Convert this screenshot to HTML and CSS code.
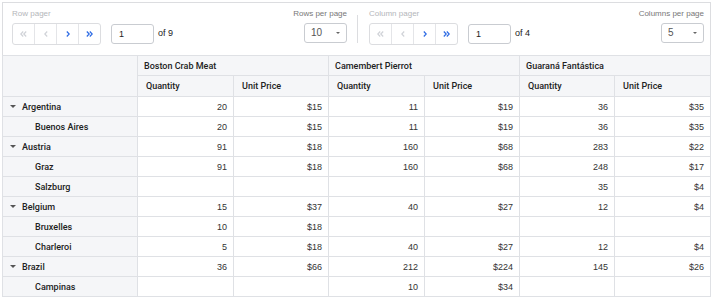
FILE: index.html
```html
<!DOCTYPE html>
<html>
<head>
    <title>Pivot Grid</title>
    <link rel="stylesheet" href="styles.css">
</head>
<body>
    <div class="pivot">
        <div class="pager-bar">
            <div class="pager-section">
                <div class="pager-block">
                    <div class="pager-label">Row pager</div>
                    <div class="pager-controls">
                        <div class="btn-group">
                            <span class="pg-btn disabled"><svg width="7" height="6" viewBox="0 0 7 6"><path d="M3.2 0.5 L0.8 3 L3.2 5.5 M6.2 0.5 L3.8 3 L6.2 5.5"/></svg></span>
                            <span class="pg-btn disabled"><svg width="4" height="6" viewBox="0 0 4 6"><path d="M3.2 0.5 L0.8 3 L3.2 5.5"/></svg></span>
                            <span class="pg-btn"><svg width="4" height="6" viewBox="0 0 4 6"><path d="M0.8 0.5 L3.2 3 L0.8 5.5"/></svg></span>
                            <span class="pg-btn"><svg width="7" height="6" viewBox="0 0 7 6"><path d="M0.8 0.5 L3.2 3 L0.8 5.5 M3.8 0.5 L6.2 3 L3.8 5.5"/></svg></span>
                        </div>
                        <div class="page-input">1</div>
                        <span class="page-total">of 9</span>
                    </div>
                </div>
                <div class="size-block">
                    <div class="size-label">Rows per page</div>
                    <div class="size-select">10<span class="caret"></span></div>
                </div>
            </div>
            <div class="pager-sep"></div>
            <div class="pager-section">
                <div class="pager-block">
                    <div class="pager-label">Column pager</div>
                    <div class="pager-controls">
                        <div class="btn-group">
                            <span class="pg-btn disabled"><svg width="7" height="6" viewBox="0 0 7 6"><path d="M3.2 0.5 L0.8 3 L3.2 5.5 M6.2 0.5 L3.8 3 L6.2 5.5"/></svg></span>
                            <span class="pg-btn disabled"><svg width="4" height="6" viewBox="0 0 4 6"><path d="M3.2 0.5 L0.8 3 L3.2 5.5"/></svg></span>
                            <span class="pg-btn"><svg width="4" height="6" viewBox="0 0 4 6"><path d="M0.8 0.5 L3.2 3 L0.8 5.5"/></svg></span>
                            <span class="pg-btn"><svg width="7" height="6" viewBox="0 0 7 6"><path d="M0.8 0.5 L3.2 3 L0.8 5.5 M3.8 0.5 L6.2 3 L3.8 5.5"/></svg></span>
                        </div>
                        <div class="page-input">1</div>
                        <span class="page-total">of 4</span>
                    </div>
                </div>
                <div class="size-block">
                    <div class="size-label">Columns per page</div>
                    <div class="size-select">5<span class="caret"></span></div>
                </div>
            </div>
        </div>

        <table class="grid">
            <colgroup>
                <col style="width: 135px">
                <col style="width: 96px">
                <col style="width: 95px">
                <col style="width: 96px">
                <col style="width: 95px">
                <col style="width: 95px">
                <col style="width: 96px">
            </colgroup>
            <thead>
                <tr class="head-top">
                    <th class="corner" rowspan="2"></th>
                    <th colspan="2">Boston Crab Meat</th>
                    <th colspan="2">Camembert Pierrot</th>
                    <th colspan="2">Guaraná Fantástica</th>
                </tr>
                <tr class="head-sub">
                    <th>Quantity</th>
                    <th>Unit Price</th>
                    <th>Quantity</th>
                    <th>Unit Price</th>
                    <th>Quantity</th>
                    <th>Unit Price</th>
                </tr>
            </thead>
            <tbody id="rows"></tbody>
        </table>
    </div>

    <script>
        const rows = [
            { name: 'Argentina', group: true, v: ['20', '$15', '11', '$19', '36', '$35'] },
            { name: 'Buenos Aires', v: ['20', '$15', '11', '$19', '36', '$35'] },
            { name: 'Austria', group: true, v: ['91', '$18', '160', '$68', '283', '$22'] },
            { name: 'Graz', v: ['91', '$18', '160', '$68', '248', '$17'] },
            { name: 'Salzburg', v: ['', '', '', '', '35', '$4'] },
            { name: 'Belgium', group: true, v: ['15', '$37', '40', '$27', '12', '$4'] },
            { name: 'Bruxelles', v: ['10', '$18', '', '', '', ''] },
            { name: 'Charleroi', v: ['5', '$18', '40', '$27', '12', '$4'] },
            { name: 'Brazil', group: true, v: ['36', '$66', '212', '$224', '145', '$26'] },
            { name: 'Campinas', v: ['', '', '10', '$34', '', ''] }
        ];

        const body = document.getElementById('rows');
        rows.forEach(function (r) {
            const tr = document.createElement('tr');
            const th = document.createElement('th');
            th.className = r.group ? 'row-head group' : 'row-head child';
            if (r.group) {
                const caret = document.createElement('span');
                caret.className = 'expander';
                th.appendChild(caret);
            }
            th.appendChild(document.createTextNode(r.name));
            tr.appendChild(th);
            r.v.forEach(function (val) {
                const td = document.createElement('td');
                td.textContent = val;
                tr.appendChild(td);
            });
            body.appendChild(tr);
        });
    </script>
</body>
</html>
```

FILE: styles.css
```css
body {
    margin: 0;
    padding: 2px;
    font-family: "Liberation Sans", Arial, sans-serif;
    font-size: 9px;
    color: #333;
    background-color: white;
}

.pivot {
    width: 707px;
    border: 1px solid #dcdde0;
    border-bottom: none;
}

/* pager bar */

.pager-bar {
    display: flex;
    align-items: flex-start;
    height: 52px;
    padding: 6px 6px 0 9px;
    box-sizing: border-box;
}

.pager-section {
    flex: 1;
    display: flex;
    justify-content: space-between;
}

.pager-sep {
    width: 1px;
    height: 28px;
    margin: 6px 11px 0 10px;
    background-color: #dcdde0;
}

.pager-label,
.size-label {
    font-size: 8px;
    line-height: 10px;
    height: 10px;
    margin-bottom: 4px;
}

.pager-label {
    color: #b4b6ba;
}

.size-block {
    display: flex;
    flex-direction: column;
    align-items: flex-end;
}

.size-label {
    color: #777;
}

.pager-controls {
    display: flex;
    align-items: center;
}

.btn-group {
    display: flex;
    height: 20px;
    border: 1px solid #dcdde0;
    border-radius: 3px;
}

.pg-btn {
    display: flex;
    align-items: center;
    justify-content: center;
    width: 21px;
    border-left: 1px solid #e4e5e8;
}

.pg-btn:first-child {
    border-left: none;
}

.pg-btn svg {
    fill: none;
    stroke: #2d6be4;
    stroke-width: 1.2;
}

.pg-btn.disabled svg {
    stroke: #d0d3d8;
}

.page-input {
    width: 34px;
    height: 18px;
    line-height: 18px;
    margin-left: 10px;
    padding-left: 7px;
    border: 1px solid #c9ccd1;
    border-radius: 3px;
    font-size: 9px;
    color: #222;
}

.page-total {
    margin-left: 4px;
    margin-top: -3px;
    color: #222;
}

.size-select {
    position: relative;
    width: 35px;
    height: 18px;
    line-height: 18px;
    padding-left: 6px;
    border: 1px solid #c9ccd1;
    border-radius: 3px;
    font-size: 10px;
    color: #555;
}

.caret {
    position: absolute;
    right: 6px;
    top: 8px;
    border-left: 2.5px solid transparent;
    border-right: 2.5px solid transparent;
    border-top: 2.5px solid #666;
}

/* grid */

.grid {
    width: 709px;
    margin-left: -1px;
    border-collapse: collapse;
    table-layout: fixed;
}

.grid th,
.grid td {
    border: 1px solid #dfe1e5;
    padding: 0;
    white-space: nowrap;
    overflow: hidden;
}

.grid thead th,
.row-head {
    background-color: #f5f6f8;
    text-align: left;
    font-family: Roboto, "Liberation Sans", sans-serif;
    font-weight: 500;
    color: #222;
}

.head-top th {
    height: 19px;
    padding-left: 6px;
}

.head-sub th {
    height: 20px;
    padding-left: 8px;
}

.grid .corner {
    padding: 0;
}

.row-head {
    height: 19px;
}

.row-head.group {
    padding-left: 7px;
}

.row-head.child {
    padding-left: 32px;
}

.expander {
    display: inline-block;
    vertical-align: middle;
    margin: -1px 6px 0 0;
    border-left: 3px solid transparent;
    border-right: 3px solid transparent;
    border-top: 3px solid #555;
}

.grid td {
    text-align: right;
    padding-right: 6px;
    color: #333;
}
```
